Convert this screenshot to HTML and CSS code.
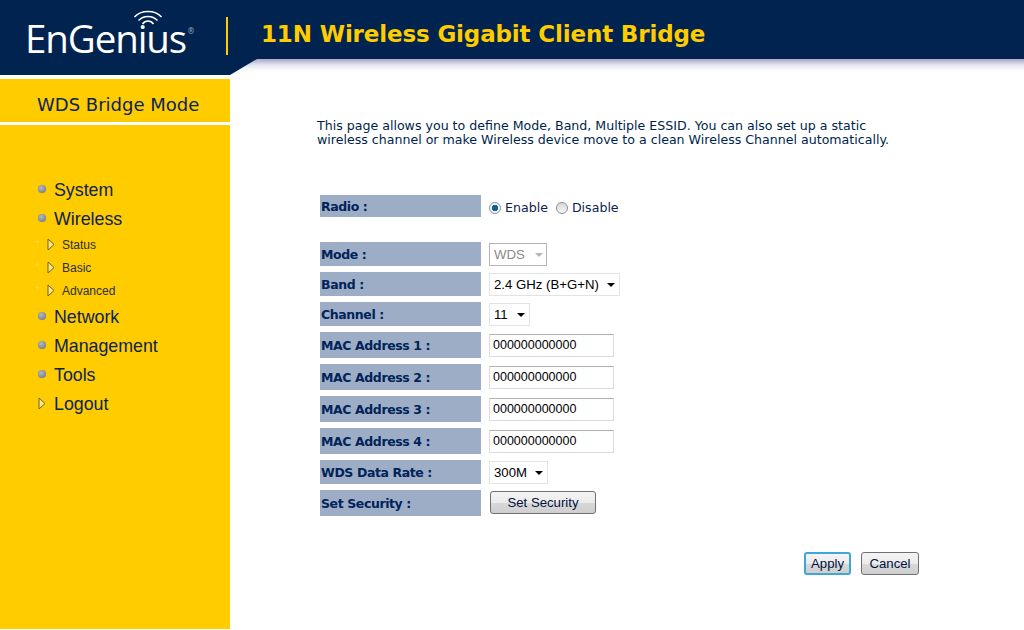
FILE: index.html
```html
<!DOCTYPE html>
<html lang="en">
<head>
<meta charset="utf-8">
<title>EnGenius 11N Wireless Gigabit Client Bridge</title>
<link rel="stylesheet" href="styles.css">
</head>
<body>
<div class="header-shadow">
  <header class="header">
    <div class="logo">
      <svg class="logo-wifi" width="30" height="20" viewBox="0 0 30 20" aria-hidden="true">
        <path d="M1.500 8C8 .8 22 .8 28.500 8M5.500 11.500C10.500 6 19.500 6 24.500 11.500M9.500 15C12.500 11 17.500 11 20.500 15" fill="none" stroke="#fff" stroke-width="1.500"/>
      </svg>
      <span class="logo-text">EnGenius</span><span class="logo-reg">®</span>
    </div>
    <div class="divider"></div>
    <h1 class="title">11N Wireless Gigabit Client Bridge</h1>
  </header>
</div>
<div class="layout">
  <aside class="sidebar">
    <div class="mode">WDS Bridge Mode</div>
    <nav class="nav">
      <a class="nav-item"><span class="dot"></span>System</a>
      <a class="nav-item"><span class="dot"></span>Wireless</a>
      <a class="sub-item"><svg class="tri" width="8" height="13" viewBox="0 0 8 13"><path d="M1 1L7 6.500L1 12Z" fill="#ffe680" stroke="#6d6330"/></svg>Status</a>
      <a class="sub-item"><svg class="tri" width="8" height="13" viewBox="0 0 8 13"><path d="M1 1L7 6.500L1 12Z" fill="#ffe680" stroke="#6d6330"/></svg>Basic</a>
      <a class="sub-item"><svg class="tri" width="8" height="13" viewBox="0 0 8 13"><path d="M1 1L7 6.500L1 12Z" fill="#ffe680" stroke="#6d6330"/></svg>Advanced</a>
      <a class="nav-item"><span class="dot"></span>Network</a>
      <a class="nav-item"><span class="dot"></span>Management</a>
      <a class="nav-item"><span class="dot"></span>Tools</a>
      <a class="nav-item"><svg class="tri-main" width="8" height="13" viewBox="0 0 8 13"><path d="M1 1L7 6.500L1 12Z" fill="#ffe680" stroke="#6d6330"/></svg>Logout</a>
    </nav>
  </aside>
  <main class="content">
    <p class="intro">This page allows you to define Mode, Band, Multiple ESSID. You can also set up a static<br>wireless channel or make Wireless device move to a clean Wireless Channel automatically.</p>
    <form class="form">
      <div class="row row-radio">
        <div class="label">Radio :</div>
        <div class="value radios">
          <label class="radio"><span class="radio-mark on"></span>Enable</label>
          <label class="radio"><span class="radio-mark"></span>Disable</label>
        </div>
      </div>
      <div class="row row-s"><div class="label">Mode :</div><div class="value"><span class="select disabled w-mode">WDS<i class="caret"></i></span></div></div>
      <div class="row row-s"><div class="label">Band :</div><div class="value"><span class="select w-band">2.4 GHz (B+G+N)<i class="caret"></i></span></div></div>
      <div class="row row-s"><div class="label">Channel :</div><div class="value"><span class="select w-chan">11<i class="caret"></i></span></div></div>
      <div class="row row-m"><div class="label">MAC Address 1 :</div><div class="value"><input class="input" value="000000000000"></div></div>
      <div class="row row-m"><div class="label">MAC Address 2 :</div><div class="value"><input class="input" value="000000000000"></div></div>
      <div class="row row-m"><div class="label">MAC Address 3 :</div><div class="value"><input class="input" value="000000000000"></div></div>
      <div class="row row-m"><div class="label">MAC Address 4 :</div><div class="value"><input class="input" value="000000000000"></div></div>
      <div class="row row-s"><div class="label">WDS Data Rate :</div><div class="value"><span class="select w-rate">300M<i class="caret"></i></span></div></div>
      <div class="row row-m"><div class="label">Set Security :</div><div class="value value-top"><button type="button" class="btn btn-sec">Set Security</button></div></div>
    </form>
    <div class="actions">
      <button type="button" class="btn btn-apply">Apply</button>
      <button type="button" class="btn btn-cancel">Cancel</button>
    </div>
  </main>
</div>
</body>
</html>
```

FILE: styles.css
```css
* { box-sizing: border-box; }
html, body { margin: 0; height: 100%; background: #fff; overflow: hidden; }
body { font-family: "DejaVu Sans", Verdana, sans-serif; color: #001f4d; }

.header-shadow { height: 76px; background: linear-gradient(to bottom, #00234f 59px, #a6a8c8 59px, #e4e5f0 65px, #fff 71px); }
.header {
  height: 76px;
  background: #00234f;
  display: flex;
  align-items: flex-start;
  clip-path: polygon(0 0, 100% 0, 100% 59px, 257px 59px, 230px 75px, 0 75px);
}
.logo { position: relative; width: 226px; height: 60px; flex: none; padding: 16px 0 0 25px; display: flex; align-items: flex-start; color: #fff; }
.logo-text { font-family: "Open Sans", sans-serif; font-weight: 400; font-size: 38.500px; line-height: 44px; letter-spacing: -1.100px; }
.logo-reg { font-size: 8px; color: #9aa6b8; margin: 11px 0 0 1px; }
.logo-wifi { position: absolute; left: 133px; top: 9px; }
.divider { width: 2px; height: 38px; background: #ffcc00; margin: 17px 0 0 0; flex: none; }
.title { margin: 19px 0 0 33px; font-size: 23px; line-height: 30px; font-weight: 700; color: #ffcc00; letter-spacing: -.15px; white-space: nowrap; }

.layout { display: grid; grid-template-columns: 230px 1fr; height: 553px; }
.sidebar { background: #ffcc00; margin-top: 3px; }
.mode { height: 46px; border-bottom: 3px solid #fff; padding-left: 37px; font-size: 18px; line-height: 51px; color: #0c2350; }
.nav { padding: 51px 0 0 38px; display: flex; flex-direction: column; font-family: "Liberation Sans", Arial, sans-serif; color: #0c2350; }
.nav-item { display: flex; align-items: center; height: 29px; font-size: 17.800px; }
.sub-item { display: flex; align-items: center; height: 23px; padding-bottom: 2px; font-size: 12px; padding-left: 9px; color: #2b2f3d; position: relative; }
.sub-item::before { content: "+"; position: absolute; left: -3px; top: 3px; font-size: 9px; color: #ffdf55; }
.dot { width: 8px; height: 8px; border-radius: 50%; margin-right: 8px; margin-top: -4px; flex: none; background: radial-gradient(circle at 40% 35%, #b4b9c4, #636d88); box-shadow: 0 0 1px #c9a800; }
.tri { margin-right: 7px; flex: none; }
.tri-main { margin-right: 8px; flex: none; margin-top: -2px; }

.content { padding: 43px 0 0 87px; }
.intro { margin: 0 0 48px; font-size: 12.600px; line-height: 14px; color: #001f4d; white-space: nowrap; }
.form { display: flex; flex-direction: column; gap: 6px; margin-left: 3px; }
.row { display: flex; align-items: stretch; gap: 8px; }
.row-radio { height: 22px; margin-bottom: 19px; }
.row-s { height: 24px; }
.row-m { height: 26px; }
.label { width: 161px; flex: none; background: #9dadc6; padding-left: 1px; font-size: 12.500px; letter-spacing: -.4px; font-weight: 700; color: #00235a; display: flex; align-items: center; }
.value { display: flex; align-items: center; font-family: "Liberation Sans", Arial, sans-serif; font-size: 13.200px; color: #000; }
.value-top { align-items: flex-start; padding-top: 1px; }

.radios { gap: 8px; font-family: "DejaVu Sans", Verdana, sans-serif; font-size: 12.600px; color: #0c2350; padding-top: 3px; }
.radio { display: flex; align-items: center; gap: 4px; }
.radio-mark { width: 12px; height: 12px; border-radius: 50%; border: 1px solid #8a8f96; background: linear-gradient(#d8d8d8, #f6f6f6); display: block; }
.radio-mark.on { background: radial-gradient(circle, #1b5f8e 0 3px, #f4f4f4 3.500px); }

.select { position: relative; display: block; height: 23px; background: #fff; border: 1px solid #e3e3e3; padding-left: 4px; line-height: 21px; white-space: nowrap; }
.select.disabled { border-color: #b5b5b5; color: #8a8a8a; }
.caret { position: absolute; right: 4px; top: 9px; border: 4px solid transparent; border-top-color: #000; border-bottom: 0; }
.disabled .caret { border-top-color: #b5b5b5; right: 3px; }
.w-mode { width: 58px; }
.w-band { width: 131px; }
.w-chan { width: 41px; }
.w-rate { width: 59px; }
.input { width: 125px; height: 23px; border: 1px solid #dcdcdc; border-top-color: #b0b0b0; background: #fff; padding: 0 3px; font: 12.500px "Liberation Sans", Arial, sans-serif; color: #000; outline: 0; }

.btn { height: 23px; padding: 0; font: 13.200px "Liberation Sans", Arial, sans-serif; color: #001040; border: 1px solid #707070; border-radius: 3px; background: linear-gradient(#f4f4f4 0, #ebebeb 50%, #d8d8d8 52%, #cfcfcf 100%); }
.btn-sec { width: 106px; margin-left: 1px; }
.actions { display: flex; justify-content: flex-end; gap: 10px; width: 602px; margin-top: 36px; }
.btn-apply { width: 47px; border: 2px solid #3fa6d8; }
.btn-cancel { width: 58px; }
```
